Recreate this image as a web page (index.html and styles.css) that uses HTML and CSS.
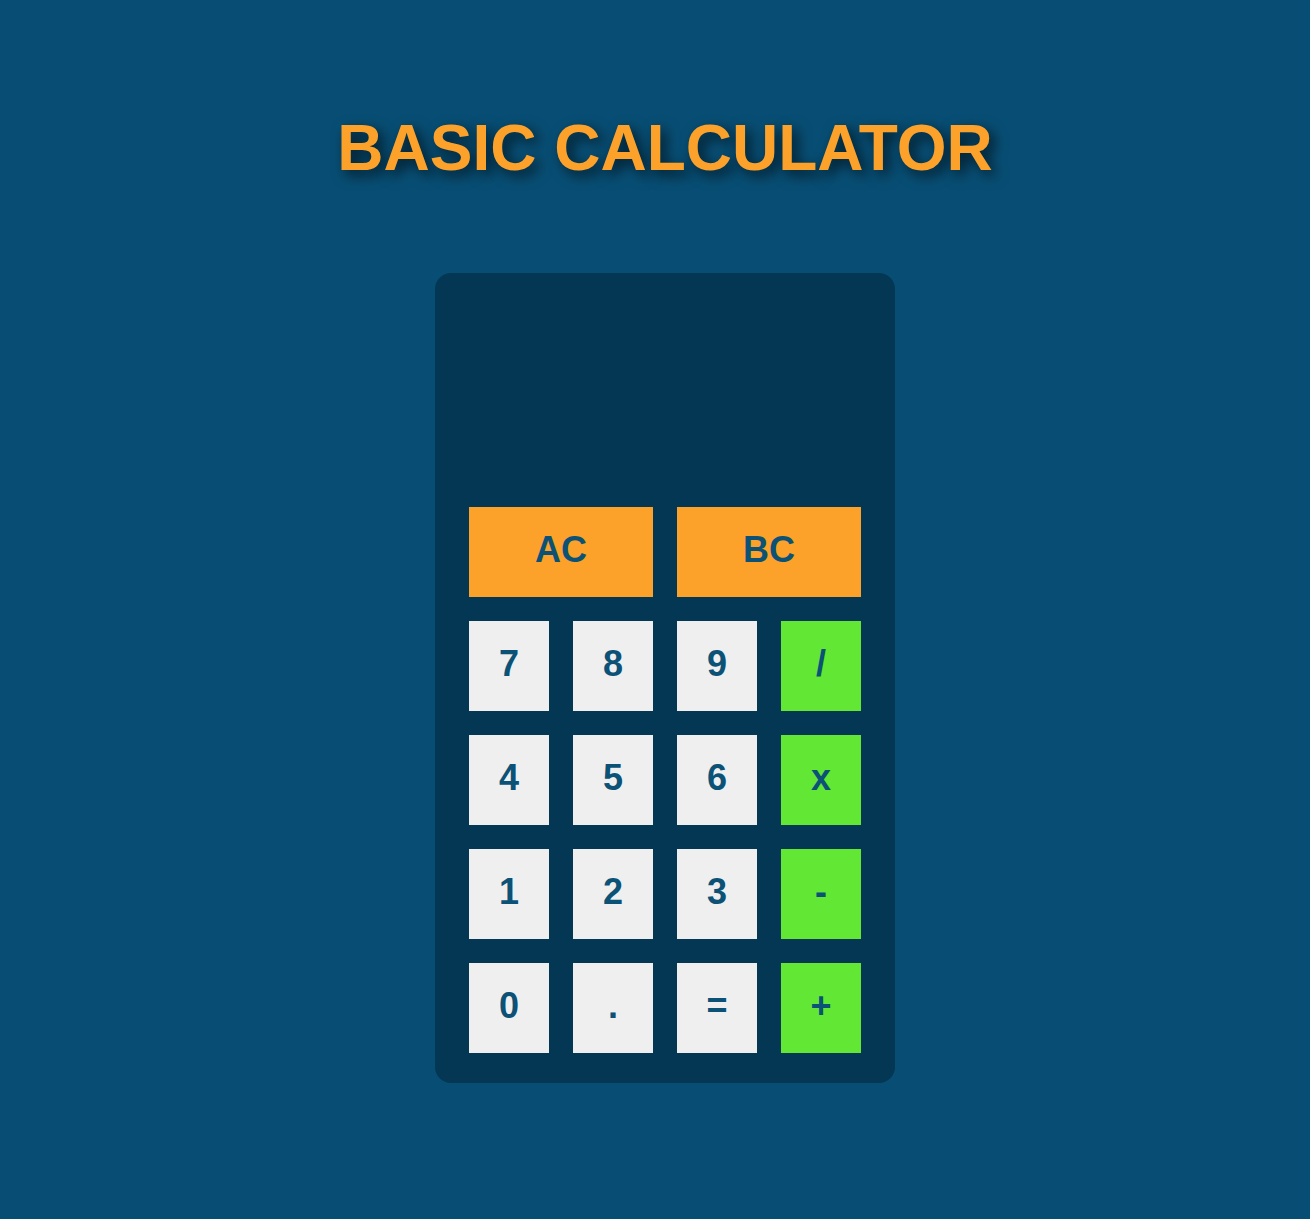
FILE: index.html
```html
<!DOCTYPE html>
<html>
<head>
<meta charset="utf-8">
<title>Basic Calculator</title>
<link rel="stylesheet" href="styles.css">
</head>
<body>
<h1 class="title">BASIC CALCULATOR</h1>
<div class="calc">
  <div class="display"></div>
  <div class="keys">
    <button class="key clear wide">AC</button>
    <button class="key clear wide">BC</button>
    <button class="key num">7</button>
    <button class="key num">8</button>
    <button class="key num">9</button>
    <button class="key op">/</button>
    <button class="key num">4</button>
    <button class="key num">5</button>
    <button class="key num">6</button>
    <button class="key op">x</button>
    <button class="key num">1</button>
    <button class="key num">2</button>
    <button class="key num">3</button>
    <button class="key op">-</button>
    <button class="key num">0</button>
    <button class="key num">.</button>
    <button class="key num">=</button>
    <button class="key op">+</button>
  </div>
</div>
</body>
</html>
```

FILE: styles.css
```css
html, body {
  margin: 0;
  padding: 0;
}
body {
  background: #084e74;
  font-family: "Liberation Sans", Arial, sans-serif;
  min-height: 1219px;
  box-sizing: border-box;
  padding-left: 20px;
  display: flex;
  flex-direction: column;
  align-items: center;
}
.title {
  margin: 110px 0 0;
  font-size: 64px;
  line-height: 76px;
  font-weight: 700;
  color: #fca22a;
  text-shadow: 5px 5px 14px rgba(0, 0, 0, 0.7);
  letter-spacing: 0;
}
.calc {
  margin-top: 87px;
  width: 460px;
  box-sizing: border-box;
  background: #043753;
  border-radius: 16px;
  padding: 34px 34px 30px;
}
.display {
  height: 176px;
  margin-bottom: 24px;
}
.keys {
  display: grid;
  grid-template-columns: repeat(4, 80px);
  grid-auto-rows: 90px;
  gap: 24px;
}
.key {
  border: none;
  margin: 0;
  padding: 0 0 4px;
  font-family: "Liberation Sans", Arial, sans-serif;
  font-weight: 700;
  font-size: 36px;
  color: #0b5276;
  display: flex;
  align-items: center;
  justify-content: center;
}
.wide {
  grid-column: span 2;
}
.clear {
  background: #fca22a;
}
.num {
  background: #efefef;
}
.op {
  background: #61e734;
}
```
